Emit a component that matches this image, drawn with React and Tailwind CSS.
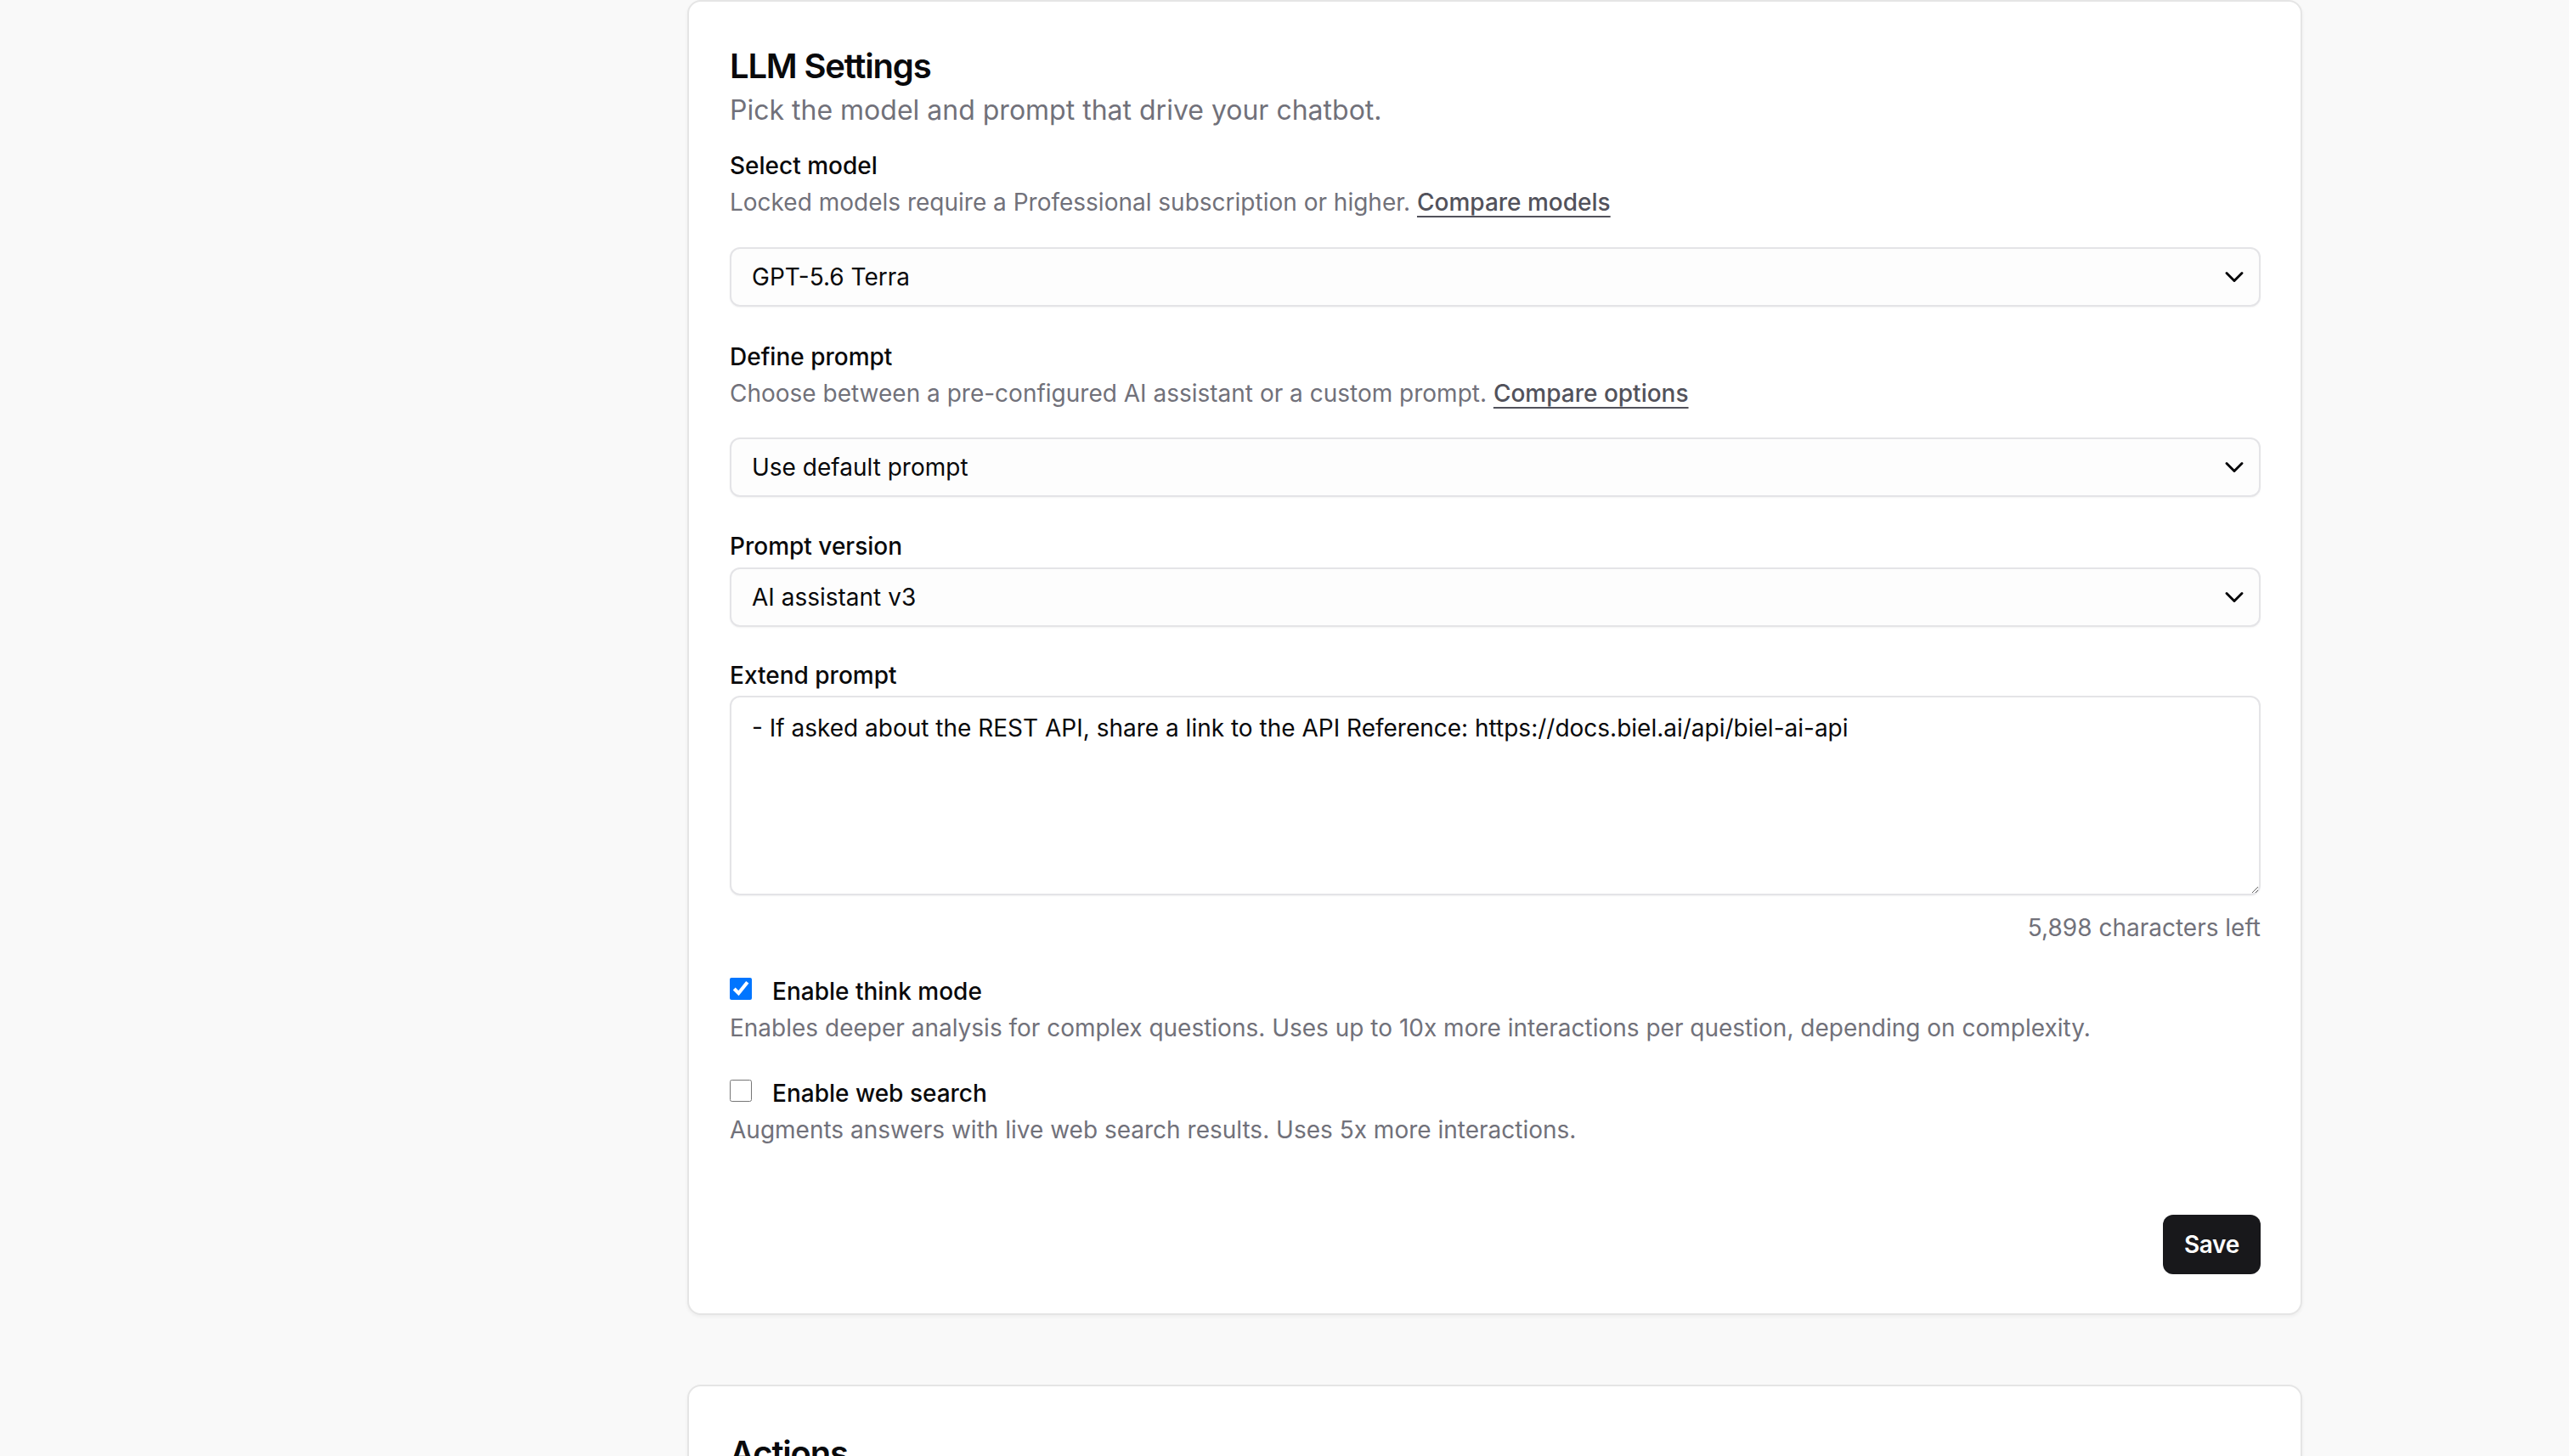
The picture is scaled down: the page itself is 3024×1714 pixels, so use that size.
import React from 'react';
import { ChevronDown } from 'lucide-react';

const SelectBox = ({ value, className = '' }) => {
  return (
    <div className={`flex h-[70px] items-center justify-between rounded-[12px] border-2 border-[#e4e4e7] bg-[#fdfdfd] pl-[24px] pr-[11px] shadow-[0_1px_2px_rgba(0,0,0,0.05)] ${className}`}>
      <span className="text-[28px] leading-[40px] text-[#09090b]">{value}</span>
      <ChevronDown size={36} strokeWidth={2} className="text-[#09090b]" />
    </div>
  );
};

const Label = ({ children, className = '' }) => (
  <div className={`text-[28px] font-medium leading-[40px] text-[#09090b] ${className}`}>{children}</div>
);

const Hint = ({ children, className = '' }) => (
  <div className={`text-[28px] leading-[40px] text-[#71717a] ${className}`}>{children}</div>
);

const ToggleRow = ({ checked, label, hint, className = '' }) => (
  <div className={className}>
    <label className="flex items-start gap-[24px]">
      <input
        type="checkbox"
        defaultChecked={checked}
        className="m-0 mt-[4px] h-[26px] w-[26px] shrink-0"
      />
      <span className="text-[28px] font-medium leading-[40px] text-[#09090b]">{label}</span>
    </label>
    <Hint className="mt-[3px]">{hint}</Hint>
  </div>
);

export default function App() {
  return (
    <div className="flex min-h-screen w-full bg-[#f9f9f9] font-['Inter','Liberation_Sans',sans-serif]">
      {/* sidebar area (empty) */}
      <div className="w-[495px] shrink-0"></div>

      <main className="flex-1">
        <div className="mx-auto w-[1901px]">
          {/* LLM Settings card */}
          <section className="rounded-[16px] border-2 border-[#e5e5e5] bg-white pt-[52px] pr-[47px] pb-[46px] pl-[48px] shadow-[0_2px_4px_rgba(0,0,0,0.05)]">
            <h2 className="text-[40px] font-semibold leading-[48px] tracking-[-1.2px] text-[#09090b]">LLM Settings</h2>
            <p className="mt-[6px] text-[32px] leading-[44px] text-[#71717a]">Pick the model and prompt that drive your chatbot.</p>

            <Label className="mt-[23px]">Select model</Label>
            <Hint className="mt-[3px]">
              Locked models require a Professional subscription or higher.{' '}
              <a className="font-medium text-[#52525b] underline decoration-[2px] underline-offset-[6px]">Compare models</a>
            </Hint>
            <SelectBox value="GPT-5.6 Terra" className="mt-[33px]" />

            <Label className="mt-[39px]">Define prompt</Label>
            <Hint className="mt-[3px]">
              Choose between a pre-configured AI assistant or a custom prompt.{' '}
              <a className="font-medium text-[#52525b] underline decoration-[2px] underline-offset-[6px]">Compare options</a>
            </Hint>
            <SelectBox value="Use default prompt" className="mt-[32px]" />

            <Label className="mt-[38px]">Prompt version</Label>
            <SelectBox value="AI assistant v3" className="mt-[5px]" />

            <Label className="mt-[37px]">Extend prompt</Label>
            <textarea
              className="mt-[4px] block h-[235px] w-full resize-y rounded-[12px] border-2 border-[#e4e4e7] bg-white px-[24px] pt-[16px] text-[28px] leading-[40px] text-[#09090b] shadow-[0_1px_2px_rgba(0,0,0,0.05)] outline-none"
              defaultValue="- If asked about the REST API, share a link to the API Reference: https://docs.biel.ai/api/biel-ai-api"
            />
            <div className="mt-[18px] text-right text-[28px] leading-[40px] text-[#71717a]">5,898 characters left</div>

            <ToggleRow
              checked
              label="Enable think mode"
              hint="Enables deeper analysis for complex questions. Uses up to 10x more interactions per question, depending on complexity."
              className="mt-[35px]"
            />
            <ToggleRow
              checked={false}
              label="Enable web search"
              hint="Augments answers with live web search results. Uses 5x more interactions."
              className="mt-[37px]"
            />

            <div className="mt-[80px] flex justify-end">
              <button className="h-[70px] rounded-[12px] bg-[#18181b] px-[25px] text-[28px] font-semibold tracking-[-0.3px] text-white">Save</button>
            </div>
          </section>

          {/* Actions card */}
          <section className="mt-[82px] h-[400px] rounded-[16px] border-2 border-[#e5e5e5] bg-white pt-[55px] pr-[47px] pl-[48px] shadow-[0_2px_4px_rgba(0,0,0,0.05)]">
            <h2 className="text-[40px] font-semibold leading-[48px] tracking-[-1.2px] text-[#09090b]">Actions</h2>
          </section>
        </div>
      </main>
    </div>
  );
}
